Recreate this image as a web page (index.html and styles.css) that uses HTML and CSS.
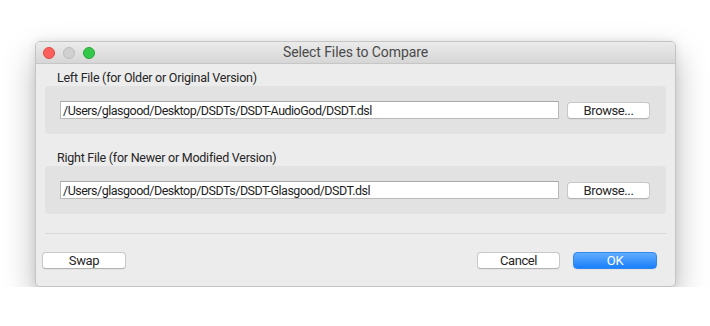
FILE: index.html
```html
<!DOCTYPE html>
<html lang="en">
<head>
  <meta charset="UTF-8">
  <title>Select Files to Compare</title>
  <link rel="stylesheet" href="styles.css">
</head>
<body>

  <div class="window">
    <div class="titlebar">
      <div class="lights">
        <span class="light red"></span>
        <span class="light gray"></span>
        <span class="light green"></span>
      </div>
      <div class="title">Select Files to Compare</div>
    </div>

    <div class="content">
      <div class="section first">
        <div class="section-label">Left File (for Older or Original Version)</div>
        <div class="group">
          <input type="text" class="path" value="/Users/glasgood/Desktop/DSDTs/DSDT-AudioGod/DSDT.dsl">
          <button class="button browse">Browse...</button>
        </div>
      </div>

      <div class="section">
        <div class="section-label">Right File (for Newer or Modified Version)</div>
        <div class="group">
          <input type="text" class="path" value="/Users/glasgood/Desktop/DSDTs/DSDT-Glasgood/DSDT.dsl">
          <button class="button browse">Browse...</button>
        </div>
      </div>

      <div class="separator"></div>
    </div>

    <div class="actions">
      <button class="button swap">Swap</button>
      <div class="right-actions">
        <button class="button cancel">Cancel</button>
        <button class="button ok">OK</button>
      </div>
    </div>
  </div>

</body>
</html>
```

FILE: styles.css
```css
body {
  margin: 0;
  padding: 41px 0 0 35px;
  background: #fff;
  font-family: Roboto, 'Liberation Sans', Arial, sans-serif;
  font-size: 13px;
  color: #262626;
}
.window {
  width: 639px;
  height: 244px;
  border: 1px solid #c4c4c4;
  border-radius: 5px;
  background: #ececec;
  box-shadow: 0 14px 32px rgba(0,0,0,0.28), 0 0 8px rgba(0,0,0,0.08);
  display: flex;
  flex-direction: column;
  overflow: hidden;
}
.titlebar {
  height: 21px;
  border-bottom: 1px solid #c6c6c6;
  background: linear-gradient(#ebebeb, #d6d6d6);
  display: flex;
  align-items: center;
  position: relative;
}
.lights {
  display: flex;
  gap: 8px;
  padding-left: 7px;
  position: relative;
  z-index: 1;
}
.light {
  width: 12px;
  height: 12px;
  border-radius: 50%;
  box-sizing: border-box;
}
.red {
  background: #fc605c;
  border: 1px solid #de4a45;
}
.gray {
  background: #d0d0d0;
  border: 1px solid #bcbcbc;
}
.green {
  background: #34c84a;
  border: 1px solid #27a83a;
}
.title {
  position: absolute;
  left: 0;
  right: 0;
  top: 0;
  line-height: 21px;
  text-align: center;
  font-size: 14px;
  letter-spacing: -0.1px;
  color: #4a4a4a;
}
.content {
  padding: 0 9px;
}
.section-label {
  line-height: 16px;
  margin-top: 16px;
  padding-left: 12px;
  font-size: 12.5px;
  letter-spacing: -0.25px;
}
.section.first .section-label {
  margin-top: 6px;
}
.group {
  height: 48px;
  background: #e2e2e2;
  border-radius: 4px;
  display: flex;
  align-items: center;
  padding: 0 16px 0 15px;
  gap: 8px;
}
.path {
  width: 499px;
  height: 18px;
  box-sizing: border-box;
  border: 1px solid #b9b9b9;
  border-top-color: #a9a9a9;
  background: #fff;
  padding: 0 2px;
  font-family: inherit;
  font-size: 12.5px;
  letter-spacing: -0.5px;
  color: #1e1e1e;
  outline: none;
  margin: 0;
}
.button {
  height: 17px;
  box-sizing: border-box;
  border: 1px solid #c8c8c8;
  border-bottom-color: #b4b4b4;
  border-radius: 4px;
  background: #fff;
  font-family: inherit;
  font-size: 13px;
  letter-spacing: -0.4px;
  color: #262626;
  padding: 0;
  margin: 0;
  line-height: 15px;
  box-shadow: 0 1px 0 rgba(0,0,0,0.04);
}
.browse {
  width: 83px;
}
.separator {
  height: 1px;
  background: #d8d8d8;
  margin-top: 19px;
}
.actions {
  display: flex;
  justify-content: space-between;
  align-items: center;
  padding: 18px 18px 0 6px;
}
.right-actions {
  display: flex;
  gap: 13px;
}
.swap {
  width: 84px;
}
.cancel {
  width: 83px;
}
.ok {
  width: 84px;
  background: linear-gradient(#62adfd, #1a7ffa);
  border-color: #2f86f5;
  color: #fff;
}
```
